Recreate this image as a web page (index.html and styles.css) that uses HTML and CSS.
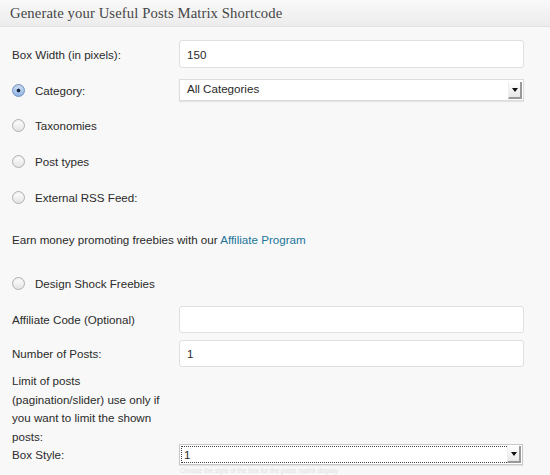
FILE: index.html
```html
<!DOCTYPE html>
<html>
<head>
<meta charset="utf-8">
<link rel="stylesheet" href="styles.css">
</head>
<body>
<div class="panel">
  <div class="header"><h3 class="title">Generate your Useful Posts Matrix Shortcode</h3></div>
  <div class="form">
    <div class="row r-width">
      <span class="label">Box Width (in pixels):</span>
      <div class="field text-input">150</div>
    </div>
    <div class="row r-cat">
      <span class="label"><span class="radio checked"></span>Category:</span>
      <div class="field select"><span class="value">All Categories</span><span class="arrow"></span></div>
    </div>
    <div class="row r-radio">
      <span class="label"><span class="radio"></span>Taxonomies</span>
    </div>
    <div class="row r-radio">
      <span class="label"><span class="radio"></span>Post types</span>
    </div>
    <div class="row r-radio">
      <span class="label"><span class="radio"></span>External RSS Feed:</span>
    </div>
    <div class="row r-earn">
      <span class="text">Earn money promoting freebies with our <a class="link" href="#">Affiliate Program</a></span>
    </div>
    <div class="row r-design">
      <span class="label"><span class="radio"></span>Design Shock Freebies</span>
    </div>
    <div class="row r-input r-aff">
      <span class="label">Affiliate Code (Optional)</span>
      <div class="field text-input"></div>
    </div>
    <div class="row r-input r-num">
      <span class="label">Number of Posts:</span>
      <div class="field text-input">1</div>
    </div>
    <div class="row r-limit">
      <span class="label multi">Limit of posts (pagination/slider) use only if you want to limit the shown posts:</span>
    </div>
    <div class="row r-style">
      <span class="label">Box Style:</span>
      <div class="field select focus"><span class="value">1</span><span class="arrow"></span></div>
    </div>
    <div class="row r-desc">
      <span class="desc">Choose the style of the box for the posts matrix display</span>
    </div>
  </div>
</div>
</body>
</html>
```
FILE: styles.css
```css
html, body {
  margin: 0;
  padding: 0;
  background: #f8f8f8;
}
body {
  width: 550px;
  height: 475px;
  overflow: hidden;
  font-family: "Liberation Sans", Arial, Helvetica, sans-serif;
  font-size: 11.6px;
  color: #2a2a2a;
}
.panel {
  background: #f8f8f8;
}
.header {
  height: 26px;
  background: linear-gradient(#f9f9f9, #ececec);
  border-bottom: 1px solid #e2e2e2;
  display: flex;
  align-items: center;
  padding-left: 10px;
}
.title {
  margin: 0;
  font-family: "Liberation Serif", "Times New Roman", serif;
  font-weight: normal;
  font-size: 14.7px;
  color: #464646;
  letter-spacing: 0.1px;
}
.form {
  padding: 13px 0 0 12px;
  width: 512px;
}
.row {
  display: flex;
  align-items: center;
}
.label {
  width: 167px;
  flex: none;
  display: flex;
  align-items: center;
}
.field {
  flex: 1;
  box-sizing: border-box;
  background: #fff;
}
.text-input {
  height: 28px;
  border: 1px solid #dfdfdf;
  border-radius: 3px;
  padding-left: 7px;
  display: flex;
  align-items: center;
}
.r-width { height: 28px; }
.r-cat { height: 22px; margin-top: 11px; margin-bottom: 6px; }
.select {
  height: 22px;
  border: 1px solid #dcdcdc;
  display: flex;
  align-items: center;
  justify-content: space-between;
  padding: 0 1px 0 7px;
  box-shadow: 0 1px 1px rgba(0,0,0,0.08);
}
.select .value {
  margin-top: -3px;
}
.arrow {
  width: 14px;
  height: 17px;
  box-sizing: border-box;
  border-right: 2px solid #999;
  border-bottom: 2px solid #999;
  border-left: 1px solid #eee;
  background: linear-gradient(#fefefe, #e8e8e8);
  position: relative;
}
.arrow::after {
  content: "";
  position: absolute;
  left: 3px;
  top: 6px;
  border-left: 3.5px solid transparent;
  border-right: 3.5px solid transparent;
  border-top: 4px solid #111;
}
.r-style .select {
  height: 21px;
  margin-right: 1px;
  border: 1px solid #c8c8c8;
  outline: 1px dotted #444;
  outline-offset: -3px;
  padding-left: 4px;
}
.r-style .select .value { margin-top: 0; }
.r-radio { height: 36px; }
.radio {
  width: 11px;
  height: 11px;
  border-radius: 50%;
  border: 1px solid #b0b0b0;
  background: linear-gradient(#fff, #e4e4e4);
  box-shadow: inset 0 1px 1px rgba(0,0,0,0.08);
  margin-right: 10px;
  flex: none;
  position: relative;
}
.radio.checked {
  border-color: #6f90c0;
  background: radial-gradient(circle, #1a2a44 0 1.6px, transparent 2.2px), linear-gradient(#cfe0f5, #8fb3e3);
}
.r-earn { height: 36px; margin-top: 6px; }
.link { color: #21759b; text-decoration: none; }
.r-design { height: 36px; margin-top: 8px; }
.r-aff { height: 27px; margin-top: 5px; }
.r-aff .text-input, .r-num .text-input { height: 27px; }
.r-num { height: 27px; margin-top: 7px; }
.r-limit { margin-top: 5px; height: 72px; align-items: flex-start; }
.multi { display: block; line-height: 18.5px; width: 152px; }
.r-style { height: 21px; }
.r-desc { margin-top: 2px; padding-left: 168px; height: 8px; align-items: flex-start; }
.desc { font-size: 6.5px; line-height: 7px; color: #e0e0e0; }
```
